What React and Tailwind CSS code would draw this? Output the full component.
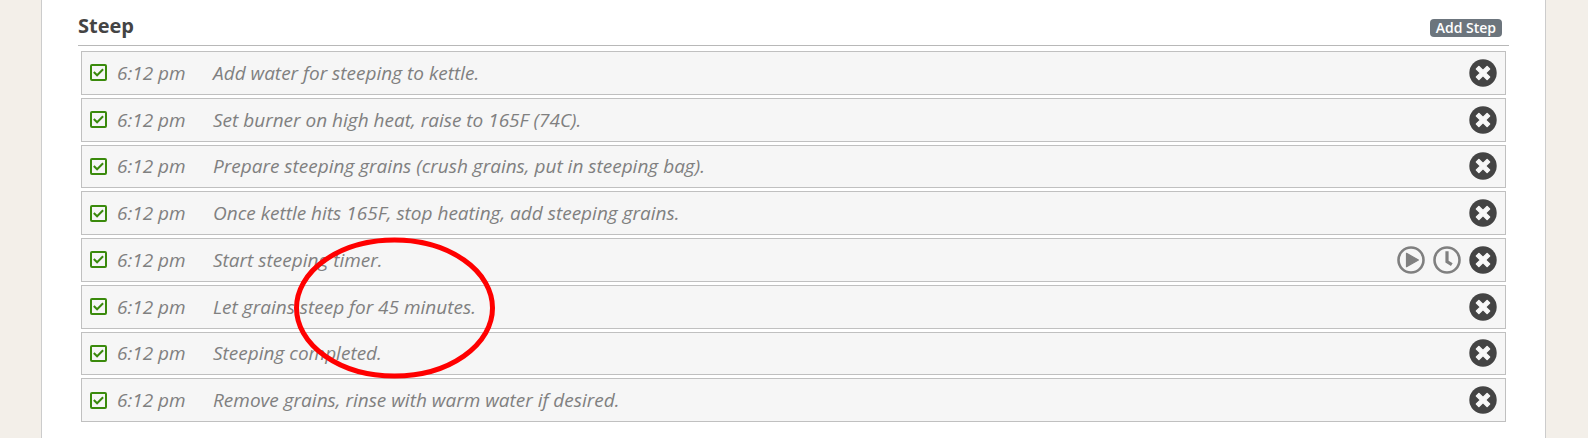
const steps = [
  { id: 1, time: "6:12 pm", text: "Add water for steeping to kettle." },
  { id: 2, time: "6:12 pm", text: "Set burner on high heat, raise to 165F (74C)." },
  { id: 3, time: "6:12 pm", text: "Prepare steeping grains (crush grains, put in steeping bag)." },
  { id: 4, time: "6:12 pm", text: "Once kettle hits 165F, stop heating, add steeping grains." },
  { id: 5, time: "6:12 pm", text: "Start steeping timer.", timer: true },
  { id: 6, time: "6:12 pm", text: "Let grains steep for 45 minutes." },
  { id: 7, time: "6:12 pm", text: "Steeping completed." },
  { id: 8, time: "6:12 pm", text: "Remove grains, rinse with warm water if desired." },
];

function RemoveIcon() {
  return (
    <svg viewBox="0 0 28 28" className="block size-7">
      <circle cx="14" cy="14" r="13.7" fill="#444" />
      <path
        d="M9.9 7.4l4.1 4.1 4.1-4.1 2.5 2.5-4.1 4.1 4.1 4.1-2.5 2.5-4.1-4.1-4.1 4.1-2.5-2.5 4.1-4.1-4.1-4.1z"
        fill="#f8f8f8"
        stroke="#f8f8f8"
        strokeWidth="1.4"
        strokeLinejoin="round"
      />
    </svg>
  );
}

function PlayIcon() {
  return (
    <svg viewBox="0 0 28 28" className="block size-7">
      <circle cx="14" cy="14" r="12.5" fill="none" stroke="#808080" strokeWidth="2.6" />
      <path d="M9.5 7.3v13.4L21.4 14z" fill="#808080" stroke="#808080" strokeWidth="1.2" strokeLinejoin="round" />
    </svg>
  );
}

function ClockIcon() {
  return (
    <svg viewBox="0 0 28 28" className="block size-7">
      <circle cx="14" cy="14" r="12.5" fill="none" stroke="#808080" strokeWidth="2.6" />
      <path d="M14 5.2v10.4l4.8 3" fill="none" stroke="#808080" strokeWidth="3.2" />
    </svg>
  );
}

function Step({ step }) {
  const id = `step-${step.id}`;

  return (
    <li className="flex items-center border border-[#c0c0c0] bg-[#f6f6f6] px-2">
      <span className="relative block size-[17px]">
        <input
          id={id}
          type="checkbox"
          defaultChecked
          className="peer block size-[17px] appearance-none rounded-xs border-2 border-[#3a8a0c]"
        />
        <svg
          viewBox="0 0 17 17"
          className="pointer-events-none absolute inset-0 hidden size-[17px] peer-checked:block"
        >
          <path d="M3.8 8l3.3 3.3 6-6" fill="none" stroke="#3a8a0c" strokeWidth="2" />
        </svg>
      </span>
      <label htmlFor={id} className="flex flex-1 pl-2.5 text-[19px] leading-7 text-[#808080] italic">
        <span className="w-24">{step.time}</span>
        <span>{step.text}</span>
      </label>

      {/* Actions */}
      <div className="flex gap-2">
        {step.timer && (
          <>
            <button type="button" aria-label="Start timer">
              <PlayIcon />
            </button>
            <button type="button" aria-label="Set time">
              <ClockIcon />
            </button>
          </>
        )}
        <button type="button" aria-label="Remove step">
          <RemoveIcon />
        </button>
      </div>
    </li>
  );
}

export default function App() {
  return (
    <div className="min-h-screen bg-[#f3efe9] pr-[42px] pl-[41px] font-['Open_Sans',sans-serif]">
      <main className="relative min-h-screen border-x border-[#ccc] bg-white px-9">
        {/* Section title */}
        <header className="flex h-[46px] items-end justify-between border-b border-[#b8b8b8] pr-[7px]">
          <h2 className="pb-[5px] text-xl leading-7 font-bold text-[#444]">Steep</h2>
          <button
            type="button"
            className="mb-2 rounded-sm bg-[#6c757d] px-1.5 text-sm leading-[18px] font-semibold text-white"
          >
            Add Step
          </button>
        </header>

        <ul className="mx-[3px] mt-[5px] grid min-h-[371px] auto-rows-fr gap-[3px]">
          {steps.map((step) => (
            <Step key={step.id} step={step} />
          ))}
        </ul>

        {/* Callout around the steeping time */}
        <svg
          viewBox="0 0 202 142"
          className="pointer-events-none absolute top-[237px] left-[251px] h-[142px] w-[202px]"
        >
          <ellipse cx="101.5" cy="71" rx="98" ry="68" fill="none" stroke="#f00" strokeWidth="5" />
        </svg>
      </main>
    </div>
  );
}
